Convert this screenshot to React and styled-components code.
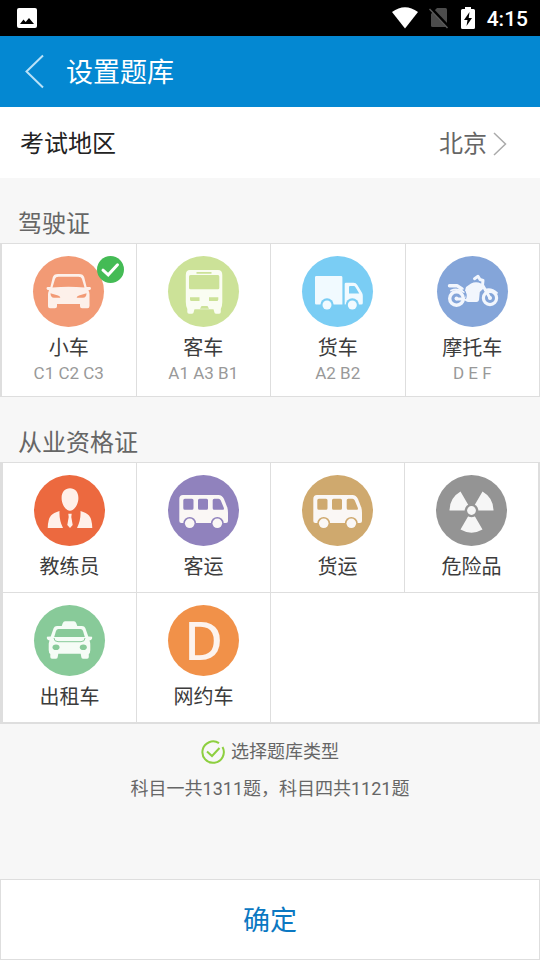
import React, { useState } from 'react'
import styled, { createGlobalStyle } from 'styled-components'

const line = '#dedede'

const GlobalStyle = createGlobalStyle`
  * {
    box-sizing: border-box;
  }

  body {
    margin: 0;
    background: #f7f7f7;
    font-family: Roboto, 'Noto Sans CJK SC', sans-serif;
  }

  button {
    font-family: inherit;
    padding: 0;
    margin: 0;
    border: 0;
    background: none;
    cursor: pointer;
  }

  svg {
    display: block;
  }
`

const Page = styled.div`
  display: flex;
  flex-direction: column;
  min-height: 100vh;
`

const StatusBar = styled.div`
  display: flex;
  align-items: center;
  height: 36px;
  padding: 0 12px 0 17px;
  background: #000;
  color: #fff;
`

const StatusIcons = styled.div`
  display: flex;
  align-items: center;
  gap: 11px;
  margin-left: auto;
`

const Clock = styled.time`
  padding-top: 2px;
  font-size: 21px;
  line-height: 34px;
  font-weight: 500;
`

const Header = styled.header`
  display: flex;
  align-items: center;
  gap: 21px;
  height: 71px;
  padding: 0 24px;
  background: #0488d2;
`

const Title = styled.h1`
  margin: 0;
  padding-top: 3px;
  color: #fff;
  font-size: 27px;
  line-height: 36px;
  font-weight: 400;
`

const RegionRow = styled.button`
  display: flex;
  align-items: center;
  height: 71px;
  padding: 2px 32px 0 20px;
  background: #fff;
  color: #222;
  font-size: 24px;
  line-height: 36px;
`

const RegionValue = styled.span`
  display: flex;
  align-items: center;
  gap: 5px;
  margin-left: auto;
  color: #666;
`

const SectionTitle = styled.h2`
  margin: 0;
  padding: 28px 18px 1px;
  color: #666;
  font-size: 24px;
  line-height: 36px;
  font-weight: 400;
`

const Grid = styled.div`
  display: grid;
  grid-template-columns: repeat(4, 1fr);
  gap: 1px;
  border: solid ${line};
  border-width: ${props => (props.$thick ? '1px 2px 2px 3px' : '1px 1px 1px 2px')};
  background: ${line};
`

const Cell = styled.button`
  display: flex;
  flex-direction: column;
  align-items: center;
  padding: 12px 0 ${props => (props.$detailed ? 12 : 11)}px;
  background: #fff;
`

const EmptyCell = styled.div`
  grid-column: span 2;
  background: #fff;
`

const Disc = styled.span`
  position: relative;
  width: 71px;
  height: 71px;
  margin-bottom: 7px;
  border-radius: 50%;
  background: ${props => props.$color};
`

const Badge = styled.span`
  position: absolute;
  top: 0;
  left: 64px;
`

const Letter = styled.span`
  display: block;
  color: #fdf3ee;
  font-family: 'Noto Sans', sans-serif;
  font-size: 53px;
  line-height: 69px;
  font-weight: 500;
  text-align: center;
`

const Label = styled.span`
  color: #3c3c3c;
  font-size: 20px;
  line-height: 28px;
`

const Codes = styled.span`
  color: #999;
  font-size: 17px;
  line-height: 22px;
`

const Info = styled.div`
  padding: 9px 0;
  color: #666;
  font-size: 18px;
  line-height: 37px;
  text-align: center;
`

const InfoLine = styled.p`
  display: flex;
  align-items: center;
  justify-content: center;
  gap: 6px;
  margin: 0;
`

const Confirm = styled.button`
  height: 81px;
  margin-top: auto;
  padding-top: 2px;
  border: 1px solid ${line};
  background: #fff;
  color: #0b78c2;
  font-size: 27px;
  line-height: 36px;
`

const Glyph = ({ fill, children }) => (
  <svg width="71" height="71" viewBox="0 0 71 71" fill={fill} aria-hidden="true">
    {children}
  </svg>
)

const CarIcon = ({ color }) => (
  <Glyph fill="#fdf0ea">
    <path d="M25 18H46c3 0 4.600 1 5.300 3.500L53.600 31H57q1 0 1 1.500 0 1.500-2.600 1.700 1.100 1.800 1.100 4V50q0 2.300-2 2.300H49q-2 0-2-2V48H24v2.300q0 2-2 2H17q-2 0-2-2V38.200q0-2.200 1.100-4-2.600-.2-2.600-1.700 0-1.500 1-1.500H17.400L19.700 21.500C20.400 19 22 18 25 18Z" />
    <path fill={color} d="M25.500 20.700H45.500q2.800 0 3.400 2L51.500 31.500Q35.500 30 19.500 31.500L22.100 22.700q.6-2 3.400-2ZM17.500 37.300 25 39.500q2.500.8 2.300 2.200H21q-3.500 0-3.500-4.400ZM53.500 37.300 46 39.500q-2.500.8-2.300 2.200H50q3.500 0 3.500-4.400Z" />
  </Glyph>
)

const BusIcon = ({ color }) => (
  <Glyph fill="#fafdf2">
    <path d="M22 14H50q4.300 0 4.300 5V46q0 4-1.500 7v3q0 1.700-1.700 1.700H48q-1.700 0-1.700-1.700L45.500 53.300H26.500L25.700 56q0 1.700-1.700 1.700H21q-1.700 0-1.700-1.700V53q-1.500-3-1.500-7V19q0-5 4.200-5Z" />
    <path fill={color} d="M28.500 16h15v1.700h-15ZM22.500 19H50q1.300 0 1.300 1.500V32q0 1.300-1.300 1.300H22.500Q21 33.300 21 32V20.500Q21 19 22.500 19ZM22 41.300H31.500V45H23.500Q22 45 22 43.500ZM41 41.300H50.300V43.500Q50.300 45 48.800 45H41ZM33.500 50H39.500L41 52.800H32Z" />
  </Glyph>
)

const TruckIcon = ({ color }) => (
  <Glyph fill="#f1faff">
    <path d="M14.300 20H39q1.400 0 1.400 1.400V48.500H14.300Q13 48.500 13 47.200V21.400Q13 20 14.300 20ZM44 26.700H51.500Q54 26.700 55.300 29L60 36.800Q60.800 38.300 60.800 40V47q0 1.500-1.500 1.500H42.700V28q0-1.300 1.300-1.300Z" />
    <path fill={color} d="M48 30H51.800q1 0 1.700 1.300L57.300 37.500H47V31q0-1 1-1Z" />
    <circle cx="25" cy="49" r="6.700" fill={color} />
    <circle cx="50.300" cy="49" r="6.700" fill={color} />
    <circle cx="25" cy="49" r="4.500" />
    <circle cx="50.300" cy="49" r="4.500" />
  </Glyph>
)

const MotorbikeIcon = ({ color }) => (
  <Glyph fill="#f2f6fd">
    <g fill="none" stroke="#f2f6fd" strokeLinecap="round" strokeLinejoin="round">
      <circle cx="19.500" cy="42.500" r="6.800" strokeWidth="3.400" />
      <circle cx="53" cy="42" r="6.600" strokeWidth="3.200" />
      <path d="M12.500 29.700H20L25 33" strokeWidth="3.400" />
      <path d="M14 34.500Q20 31.500 27 36" strokeWidth="1.800" />
      <path d="M20 43H32" strokeWidth="3" />
      <path d="M37.500 22.700 41 20.300 43 23.500 46 24.500 45.500 29 53 42" strokeWidth="3" />
      <path d="M48 34Q54 31.500 60 37" strokeWidth="1.800" />
    </g>
    <path d="M29 31 34 27.500Q39 25 44 27.500L46.500 32.500 42.800 36 42 44Q41.500 46 39.500 46H31Q28 45.500 27.500 42.500 30.500 38 28 34.500Z" />
    <path d="M26 33.500Q31 38 28.500 43" fill="none" stroke={color} strokeWidth="1" />
    <circle cx="19.500" cy="42.500" r="2" />
    <circle cx="53" cy="42" r="2" />
  </Glyph>
)

const CoachIcon = () => (
  <Glyph fill="#fff0e9">
    <path d="M36 13.300c5 0 8.400 3.700 8.400 9.700 0 6.500-4 12.700-8.400 12.700s-8.400-6.200-8.400-12.700c0-6 3.400-9.700 8.400-9.700ZM25.500 36Q25 45 29 53H13.700Q14 44 17 40.500 19.500 37.800 25.500 36ZM46.500 36Q47 45 43 53H58.300Q58 44 55 40.500 52.500 37.800 46.500 36ZM34.300 38.800H37.700L37.300 42 38.700 50 36 53 33.300 50 34.700 42Z" />
  </Glyph>
)

const VanIcon = ({ color }) => (
  <Glyph fill="#faf7f5">
    <path d="M15 20H50.500Q54 20 56 24L59.300 32.500Q60 35 60 38V46q0 2-2 2H13.300q-2 0-2-2V24q0-4 3.700-4Z" />
    <path fill={color} d="M16.800 23.700h7.200q1.500 0 1.500 1.500v8q0 1.500-1.500 1.500h-7.200q-1.500 0-1.500-1.500v-8q0-1.500 1.500-1.500ZM31.500 23.700h7q1.500 0 1.500 1.500v8q0 1.500-1.500 1.500h-7q-1.500 0-1.500-1.500v-8q0-1.500 1.500-1.500ZM46.200 23.700H50.500q1.500 0 2.300 1.700L55.900 33q.6 1.700-1 1.700H46.200q-1.500 0-1.500-1.500v-8q0-1.500 1.500-1.500Z" />
    <circle cx="21.700" cy="48.300" r="6.400" fill={color} />
    <circle cx="49.300" cy="48.300" r="6.400" fill={color} />
    <circle cx="21.700" cy="48.300" r="4.800" />
    <circle cx="49.300" cy="48.300" r="4.800" />
  </Glyph>
)

const RadiationIcon = ({ color }) => (
  <Glyph fill="#f6f6f6">
    <path d="M35.500 35.500H13.500A22 22 0 0 1 24.500 16.450ZM35.500 35.500 46.500 16.450A22 22 0 0 1 57.500 35.500ZM35.500 35.500 46.500 54.550A22 22 0 0 1 24.500 54.550Z" />
    <circle cx="35.500" cy="35.500" r="6.800" fill={color} />
    <circle cx="35.500" cy="35.500" r="4.400" />
  </Glyph>
)

const TaxiIcon = ({ color }) => (
  <Glyph fill="#f5fcf6">
    <path d="M31 16.300H40q1.500 0 2.300 2L43.300 21H48Q50.500 21 51.300 23L54.300 31.500 58 31.700Q59 34.500 55.500 35.500 56.300 37.500 56.300 40V45Q56.300 48 54.800 49V52q0 1.700-1.700 1.700H49q-1.700 0-1.700-1.700L46.700 48.700H24.300L23.700 52q0 1.700-1.700 1.700H18q-1.700 0-1.700-1.700V49Q14.700 48 14.700 45V40Q14.700 37.500 15.500 35.500 12 34.500 13 31.700L16.700 31.500 19.700 23Q20.500 21 23 21H27.700L28.700 18.300Q29.500 16.300 31 16.300Z" />
    <path fill={color} d="M24.500 24H46.500Q48.300 24 49 26L50.800 32H20.200L22 26Q22.700 24 24.500 24Z" />
    <path d="M20 33Q20 36.700 24 36.700H47Q51 36.700 51 33" fill="none" stroke={color} strokeWidth="1" />
    <ellipse cx="22" cy="42.300" rx="3.500" ry="2.800" fill={color} />
    <ellipse cx="49.300" cy="42.300" rx="3.500" ry="2.800" fill={color} />
  </Glyph>
)

const LetterIcon = () => <Letter>D</Letter>

const licences = [
  { name: '小车', codes: 'C1 C2 C3', color: '#f29a75', Icon: CarIcon },
  { name: '客车', codes: 'A1 A3 B1', color: '#cce298', Icon: BusIcon },
  { name: '货车', codes: 'A2 B2', color: '#7acdf4', Icon: TruckIcon },
  { name: '摩托车', codes: 'D E F', color: '#84a5d9', Icon: MotorbikeIcon }
]

const certificates = [
  { name: '教练员', color: '#ec693f', Icon: CoachIcon },
  { name: '客运', color: '#9082bd', Icon: VanIcon },
  { name: '货运', color: '#cfa96e', Icon: VanIcon },
  { name: '危险品', color: '#949494', Icon: RadiationIcon },
  { name: '出租车', color: '#88ca99', Icon: TaxiIcon },
  { name: '网约车', color: '#f19149', Icon: LetterIcon }
]

const Option = ({ item, selected, onSelect }) => (
  <Cell
    type="button"
    $detailed={Boolean(item.codes)}
    aria-pressed={selected}
    onClick={() => onSelect(item.name)}
  >
    <Disc $color={item.color}>
      <item.Icon color={item.color} />
      {selected && (
        <Badge>
          <svg width="27" height="27" viewBox="0 0 27 27" fill="none" aria-hidden="true">
            <circle cx="13.500" cy="13.500" r="13.500" fill="#44bb55" />
            <path d="M6 14.200 11.200 18.800 20.500 8.800" stroke="#fff" strokeWidth="3" strokeLinecap="round" />
          </svg>
        </Badge>
      )}
    </Disc>
    <Label>{item.name}</Label>
    {item.codes && <Codes>{item.codes}</Codes>}
  </Cell>
)

const App = () => {
  const [selected, setSelected] = useState('小车')

  const renderOption = item => (
    <Option
      key={item.name}
      item={item}
      selected={item.name === selected}
      onSelect={setSelected}
    />
  )

  return (
    <Page>
      <GlobalStyle />
      <StatusBar>
        <svg width="20" height="20" viewBox="0 0 20 20" aria-hidden="true">
          <rect width="20" height="20" rx="2" fill="#fff" />
          <path d="M3 16 6.500 11.500 8.700 14 12 10 17 16Z" fill="#000" />
        </svg>
        <StatusIcons>
          <svg width="26" height="22" viewBox="0 0 26 22" fill="#fff" aria-hidden="true">
            <path d="M0 5Q13-4.500 26 5L13 21.500Z" />
          </svg>
          <svg width="20" height="22" viewBox="0 0 20 22" aria-hidden="true">
            <path d="M8 1H16.500Q18 1 18 2.500V18.500Q18 20 16.500 20H3.500Q2 20 2 18.500V7Z" fill="#4c4c4c" />
            <path d="M1 .5 19.500 20" stroke="#000" strokeWidth="3.500" />
            <path d="M.5 2 18.500 21" stroke="#5c5c5c" strokeWidth="1.500" />
          </svg>
          <svg width="16" height="22" viewBox="0 0 16 22" aria-hidden="true">
            <path d="M5 0h6v2h2.500Q15 2 15 3.500V20.500Q15 22 13.500 22H2.500Q1 22 1 20.500V3.500Q1 2 2.500 2H5Z" fill="#fff" />
            <path d="M9.500 5 4 13H7.500L6.500 19 12 11H8.700Z" fill="#000" />
          </svg>
          <Clock>4:15</Clock>
        </StatusIcons>
      </StatusBar>
      <Header>
        <button type="button" aria-label="返回">
          <svg width="21" height="35" viewBox="0 0 21 35" fill="none" aria-hidden="true">
            <path d="M19 1.500 2.500 17.500 19 33.500" stroke="#b9e1f8" strokeWidth="2" />
          </svg>
        </button>
        <Title>设置题库</Title>
      </Header>
      <RegionRow type="button">
        考试地区
        <RegionValue>
          北京
          <svg width="16" height="24" viewBox="0 0 16 24" fill="none" aria-hidden="true">
            <path d="M2 1 13.500 12 2 23" stroke="#aaa" strokeWidth="1.500" />
          </svg>
        </RegionValue>
      </RegionRow>
      <SectionTitle>驾驶证</SectionTitle>
      <Grid>{licences.map(renderOption)}</Grid>
      <SectionTitle>从业资格证</SectionTitle>
      <Grid $thick>
        {certificates.map(renderOption)}
        <EmptyCell />
      </Grid>
      <Info>
        <InfoLine>
          <svg width="24" height="24" viewBox="0 0 24 24" fill="none" stroke="#8dcf3f" strokeWidth="2" aria-hidden="true">
            <path d="M21.500 7A10.700 10.700 0 1 1 18 3.200M6 11.500 11 16 18.500 8" />
          </svg>
          选择题库类型
        </InfoLine>
        <InfoLine>科目一共1311题，科目四共1121题</InfoLine>
      </Info>
      <Confirm type="button">确定</Confirm>
    </Page>
  )
}

export default App
